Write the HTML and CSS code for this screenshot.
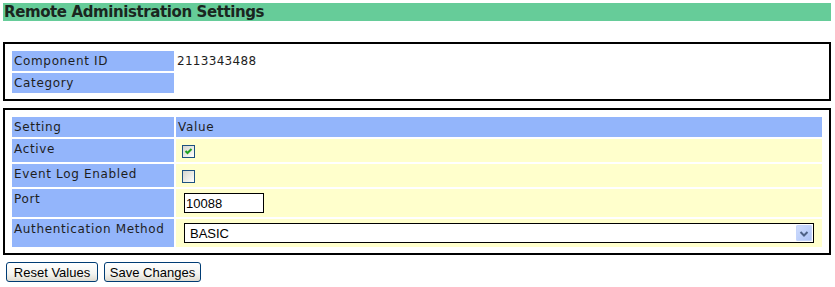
FILE: index.html
```html
<!DOCTYPE html>
<html lang="en">
<head>
    <meta charset="UTF-8">
    <meta name="viewport" content="width=device-width, initial-scale=1.0">
    <title>Remote Administration Settings</title>
    <link rel="stylesheet" href="styles.css">
</head>
<body>
<h1 class="page-title">Remote Administration Settings</h1>

<div class="panel">
    <div class="grid">
        <div class="label">Component ID</div>
        <div class="value">2113343488</div>
        <div class="label">Category</div>
        <div class="value"></div>
    </div>
</div>

<form class="panel panel-settings" onsubmit="return false;">
    <div class="grid">
        <div class="label">Setting</div>
        <div class="label head-value">Value</div>

        <div class="label">Active</div>
        <div class="field field-check">
            <label class="check">
                <input type="checkbox" name="active" checked>
                <svg class="tick" width="13" height="13" viewBox="0 0 13 13">
                    <polyline points="3.5,6 5.5,8 9.5,4" fill="none" stroke="#21a121" stroke-width="2"/>
                </svg>
            </label>
        </div>

        <div class="label">Event Log Enabled</div>
        <div class="field field-check">
            <label class="check">
                <input type="checkbox" name="eventlog">
            </label>
        </div>

        <div class="label">Port</div>
        <div class="field">
            <input class="text-input" type="text" name="port" value="10088">
        </div>

        <div class="label">Authentication Method</div>
        <div class="field">
            <div class="select-wrap">
                <select class="select" name="auth">
                    <option>BASIC</option>
                    <option>DIGEST</option>
                </select>
                <span class="select-arrow">
                    <svg width="16" height="17" viewBox="0 0 16 17">
                        <polyline points="4.5,7 8,10.5 11.5,7" fill="none" stroke="#4d6185" stroke-width="2"/>
                    </svg>
                </span>
            </div>
        </div>
    </div>
</form>

<div class="actions">
    <button class="btn btn-reset" type="button">Reset Values</button>
    <button class="btn btn-save" type="button">Save Changes</button>
</div>
</body>
</html>
```

FILE: styles.css
```css
body {
    margin: 3px 4px 0 3px;
    font-family: "DejaVu Sans", Verdana, sans-serif;
    font-size: 12px;
    color: #1e1e1e;
    background-color: #FFFFFF;
}

.page-title {
    margin: 0 -4px 0 0;
    height: 18px;
    line-height: 18px;
    padding-left: 1px;
    font-size: 15px;
    font-weight: bold;
    letter-spacing: -0.4px;
    white-space: nowrap;
    color: #1a2620;
    background-color: #66cc99;
}

.panel {
    margin-top: 21px;
    border: 2px solid #000000;
    padding: 7px 7px 6px 7px;
}

.panel-settings {
    margin-top: 7px;
}

.grid {
    display: grid;
    grid-template-columns: 162px 1fr;
    gap: 2px;
}

.label {
    background-color: #93b5fb;
    line-height: 20px;
    min-height: 20px;
    padding: 0 2px;
    letter-spacing: 0.65px;
}

.value {
    line-height: 20px;
    padding-left: 1px;
    letter-spacing: 0.3px;
}

.field {
    background-color: #ffffcc;
    padding: 4px 8px;
}

.field-check {
    padding: 6px 6px 4px 6px;
}

.check {
    position: relative;
    display: block;
    width: 13px;
    height: 13px;
}

.check input {
    appearance: none;
    -webkit-appearance: none;
    display: block;
    margin: 0;
    width: 13px;
    height: 13px;
    border: 1px solid #1c5180;
    background: linear-gradient(135deg, #d6d6ce 0%, #eeeee9 60%, #ffffff 100%);
    box-sizing: border-box;
}

.check .tick {
    position: absolute;
    left: 0;
    top: 0;
    pointer-events: none;
}

.text-input {
    display: block;
    box-sizing: border-box;
    width: 80px;
    height: 20px;
    margin: 0;
    padding: 0 1px;
    border: 1px solid #000000;
    font-family: "Liberation Sans", Arial, sans-serif;
    font-size: 13px;
    color: #000000;
}

.select-wrap {
    position: relative;
    width: 630px;
}

.select {
    appearance: none;
    -webkit-appearance: none;
    display: block;
    box-sizing: border-box;
    width: 100%;
    height: 20px;
    margin: 0;
    padding: 0 5px;
    border: 1px solid #000000;
    border-radius: 0;
    background-color: #FFFFFF;
    font-family: "Liberation Sans", Arial, sans-serif;
    font-size: 13px;
    color: #000000;
}

.select-arrow {
    position: absolute;
    right: 2px;
    top: 2px;
    width: 16px;
    height: 16px;
    border-radius: 2px;
    background: linear-gradient(135deg, #d2defc 0%, #bccffa 55%, #aac0f2 100%);
    box-shadow: inset 0 0 0 1px #c4d4fb;
    pointer-events: none;
}

.select-arrow svg {
    display: block;
}

.actions {
    display: flex;
    gap: 6px;
    margin: 7px 0 0 3px;
}

.btn {
    height: 20px;
    padding: 0;
    border: 1px solid #003c74;
    border-radius: 3px;
    background: linear-gradient(#ffffff 0%, #f4f4f0 60%, #dedbd0 100%);
    font-family: "Liberation Sans", Arial, sans-serif;
    font-size: 13px;
    color: #000000;
    cursor: pointer;
}

.btn-reset {
    width: 92px;
}

.btn-save {
    width: 97px;
}
```
